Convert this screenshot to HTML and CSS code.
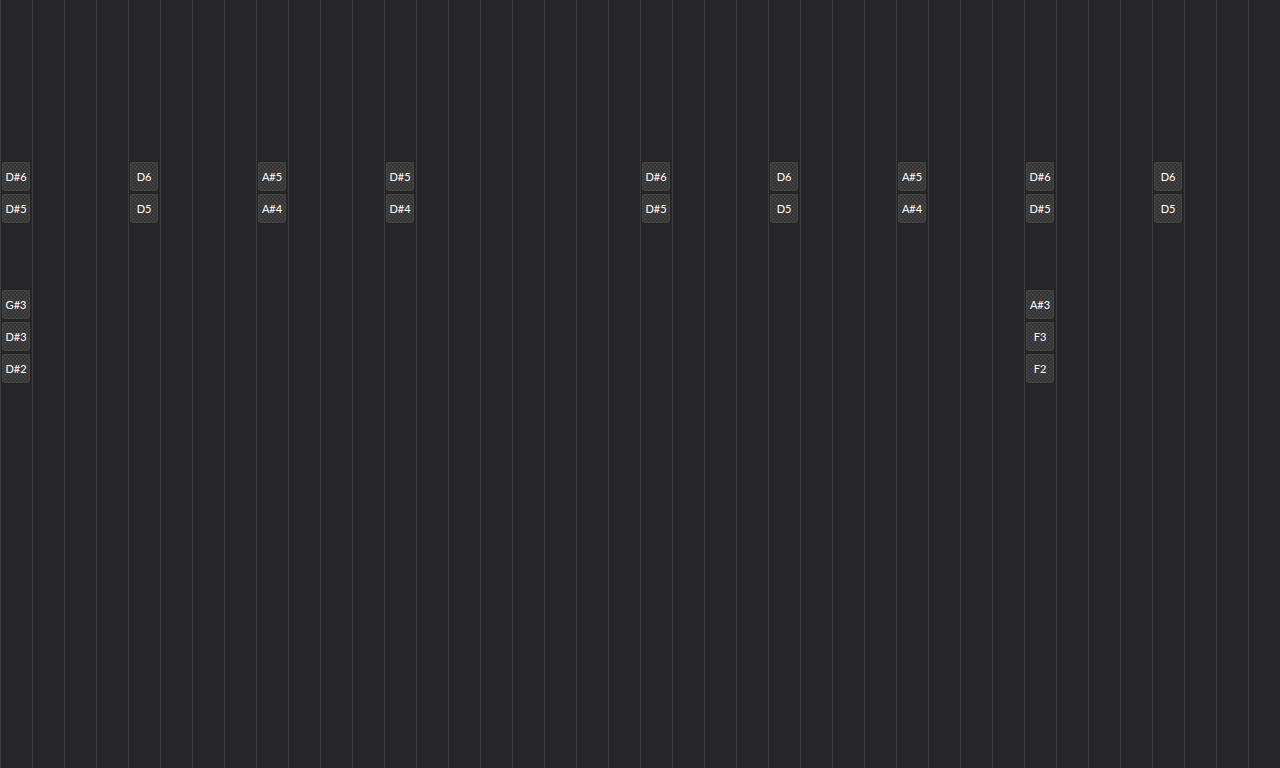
FILE: index.html
```html
<!DOCTYPE html>
<html>
<head>
<meta charset="utf-8">
<title>Sequencer</title>
<link rel="stylesheet" href="styles.css">
</head>
<body>
<div class="roll">
  <div class="note c1 r6">D#6</div>
  <div class="note c1 r7">D#5</div>
  <div class="note c1 r10">G#3</div>
  <div class="note c1 r11">D#3</div>
  <div class="note c1 r12">D#2</div>

  <div class="note c5 r6">D6</div>
  <div class="note c5 r7">D5</div>

  <div class="note c9 r6">A#5</div>
  <div class="note c9 r7">A#4</div>

  <div class="note c13 r6">D#5</div>
  <div class="note c13 r7">D#4</div>

  <div class="note c21 r6">D#6</div>
  <div class="note c21 r7">D#5</div>

  <div class="note c25 r6">D6</div>
  <div class="note c25 r7">D5</div>

  <div class="note c29 r6">A#5</div>
  <div class="note c29 r7">A#4</div>

  <div class="note c33 r6">D#6</div>
  <div class="note c33 r7">D#5</div>
  <div class="note c33 r10">A#3</div>
  <div class="note c33 r11">F3</div>
  <div class="note c33 r12">F2</div>

  <div class="note c37 r6">D6</div>
  <div class="note c37 r7">D5</div>
</div>
</body>
</html>
```
FILE: styles.css
```css
html, body { margin: 0; padding: 0; background: #262628; overflow: hidden; }

.roll {
  width: 1280px;
  height: 768px;
  display: grid;
  grid-template-columns: repeat(40, 32px);
  grid-template-rows: repeat(24, 32px);
  background: linear-gradient(to right, #3c3c3e 1px, transparent 1px) 0 0 / 32px 100% repeat-x, #262628;
  font: 11px Lato, "Open Sans", sans-serif;
}

/* one step in the pattern: checkered pad with a darker rim */
.note {
  margin: 1px 1px 0 1px;
  border: 1px solid rgba(0, 0, 0, 0.38);
  border-radius: 4px;
  background-color: #383838;
  background-image:
    conic-gradient(#414141 25%, #343434 0 50%, #414141 0 75%, #343434 0);
  background-size: 4px 4px;
  background-clip: border-box;
  box-shadow: inset 0 0 0 1px rgba(255, 255, 255, 0.05);
  color: #fff;
  display: flex;
  align-items: center;
  justify-content: center;
  line-height: 1;
}

.c1 { grid-column: 1; }
.c5 { grid-column: 5; }
.c9 { grid-column: 9; }
.c13 { grid-column: 13; }
.c21 { grid-column: 21; }
.c25 { grid-column: 25; }
.c29 { grid-column: 29; }
.c33 { grid-column: 33; }
.c37 { grid-column: 37; }

.r6 { grid-row: 6; }
.r7 { grid-row: 7; }
.r10 { grid-row: 10; }
.r11 { grid-row: 11; }
.r12 { grid-row: 12; }
```
